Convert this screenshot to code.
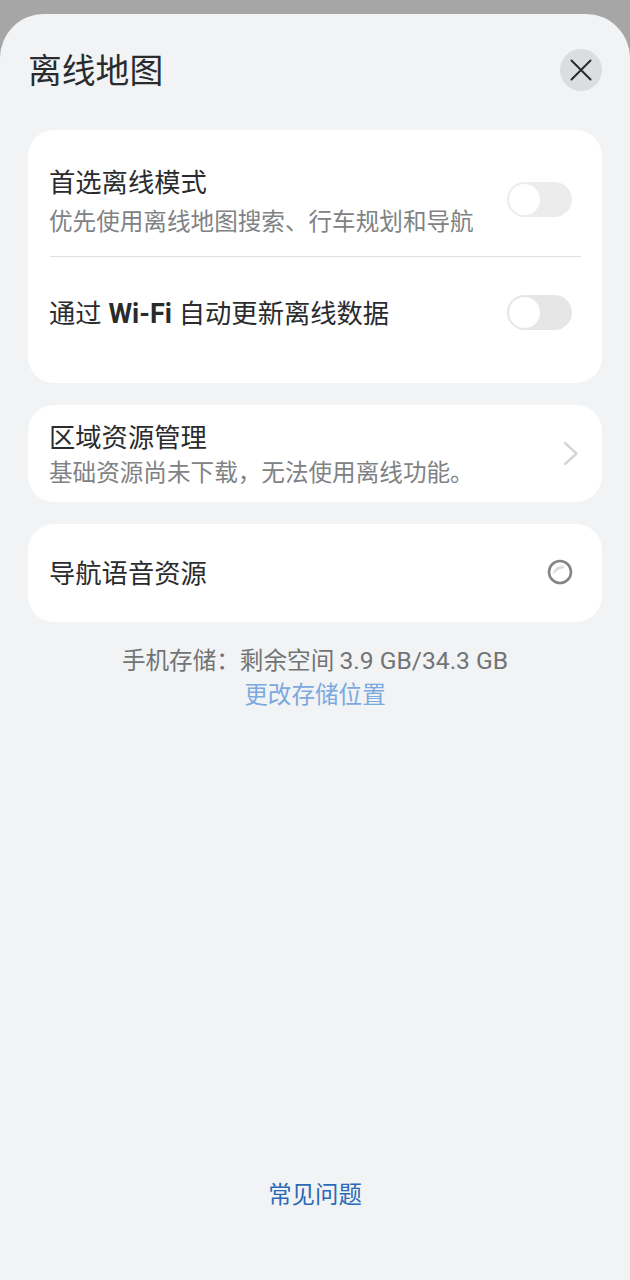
<div class="sheet">
  <header class="head">
    <h1>离线地图</h1>
    <button class="close" aria-label="关闭">
      <svg width="24" height="24" viewBox="0 0 24 24"><path d="M2.5 2.5 21.5 21.5M21.5 2.5 2.5 21.5" stroke="#2a2b2d" stroke-width="2" fill="none" stroke-linecap="round"/></svg>
    </button>
  </header>

  <section class="card first">
    <div class="row one">
      <div class="texts">
        <div class="title">首选离线模式</div>
        <div class="sub spaced">优先使用离线地图搜索、行车规划和导航</div>
      </div>
      <span class="switch light"><span class="knob"></span></span>
    </div>
    <div class="divider"></div>
    <div class="row two">
      <div class="title">通过 <b>Wi-Fi</b> 自动更新离线数据</div>
      <span class="switch"><span class="knob"></span></span>
    </div>
  </section>

  <section class="card region">
    <div class="texts">
      <div class="title">区域资源管理</div>
      <div class="sub">基础资源尚未下载，无法使用离线功能。</div>
    </div>
    <svg class="chev" width="16" height="25" viewBox="0 0 16 25"><path d="M2 2 13.5 12.5 2 23" stroke="#d4d5d7" stroke-width="2.4" fill="none" stroke-linecap="round" stroke-linejoin="round"/></svg>
  </section>

  <section class="card voice">
    <div class="title lifted">导航语音资源</div>
    <svg class="spin" width="26" height="26" viewBox="0 0 26 26">
      <circle cx="13" cy="13" r="11" stroke="#858585" stroke-width="2.6" fill="#fff"/>
      <path d="M6 15.5C6.5 10 10 7 15.5 6.5L18 9C13 9.5 9.5 11.5 6 15.5Z" fill="#dcdcdc"/>
    </svg>
  </section>

  <div class="storage">
    <div class="usage">手机存储：剩余空间 <span class="latin">3.9 GB/34.3 GB</span></div>
    <div class="change">更改存储位置</div>
  </div>

  <div class="faq">常见问题</div>
</div>

<style>
  :global(body) {
    margin: 0;
    background: #a6a6a6;
  }
  .sheet {
    box-sizing: border-box;
    height: 1266px;
    margin-top: 14px;
    padding: 0 28px;
    background: #f1f3f5;
    border-radius: 44px 44px 0 0;
    display: flex;
    flex-direction: column;
    font-family: "Noto Sans CJK SC", Roboto, sans-serif;
    color: #2a2b2d;
  }
  .head {
    height: 116px;
    flex: none;
    display: flex;
    align-items: flex-start;
    justify-content: space-between;
  }
  h1 {
    margin: 34px 0 0;
    font-size: 33.8px;
    line-height: 42px;
    font-weight: 400;
  }
  .close {
    width: 42px;
    height: 42px;
    margin-top: 35px;
    padding: 0;
    border: 0;
    border-radius: 50%;
    background: #dcdddf;
    display: flex;
    align-items: center;
    justify-content: center;
  }
  .card {
    flex: none;
    background: #fff;
    border-radius: 26px;
    padding: 0 21px 0 22px;
    box-sizing: border-box;
  }
  .first {
    height: 253px;
    margin-bottom: 22px;
  }
  .row {
    display: flex;
    align-items: center;
    justify-content: space-between;
  }
  .one {
    height: 126px;
    padding-top: 14px;
    box-sizing: border-box;
  }
  .one .switch {
    margin-top: -1px;
  }
  .two {
    height: 111px;
  }
  .divider {
    height: 1px;
    background: #dfe0e1;
  }
  .title {
    font-size: 26.3px;
    line-height: 36px;
    margin-left: -1px;
    color: #2a2b2d;
  }
  .title b {
    font-family: Roboto, sans-serif;
    font-size: 27px;
    font-weight: 700;
    margin: 0 1px;
  }
  .lifted {
    margin-bottom: 3px;
  }
  .sub {
    font-size: 23.6px;
    line-height: 34px;
    margin-left: -1px;
    color: #808284;
    white-space: nowrap;
  }
  .spaced {
    margin-top: 4px;
  }
  .switch {
    width: 65px;
    height: 35px;
    margin-right: 9px;
    border-radius: 18px;
    background: #e6e6e6;
    display: flex;
    align-items: center;
    padding-left: 2px;
    box-sizing: border-box;
  }
  .switch.light {
    background: #ececec;
  }
  .knob {
    width: 31px;
    height: 31px;
    border-radius: 50%;
    background: #fff;
  }
  .region {
    height: 97px;
    margin-bottom: 22px;
    display: flex;
    align-items: center;
    justify-content: space-between;
  }
  .region .texts {
    padding-bottom: 1px;
  }
  .chev {
    margin-right: 2px;
  }
  .voice {
    height: 98px;
    display: flex;
    align-items: center;
    justify-content: space-between;
  }
  .spin {
    margin-right: 8px;
    margin-bottom: 2px;
  }
  .storage {
    margin-top: 21px;
    text-align: center;
    font-size: 23.6px;
    line-height: 33px;
  }
  .usage {
    color: #717375;
    line-height: 32px;
  }
  .latin {
    font-family: Roboto, sans-serif;
    font-size: 24.6px;
  }
  .change {
    color: #7ba9e0;
  }
  .faq {
    margin-top: auto;
    margin-bottom: 70px;
    text-align: center;
    font-size: 23.4px;
    line-height: 34px;
    color: #2a6ab8;
  }
</style>
